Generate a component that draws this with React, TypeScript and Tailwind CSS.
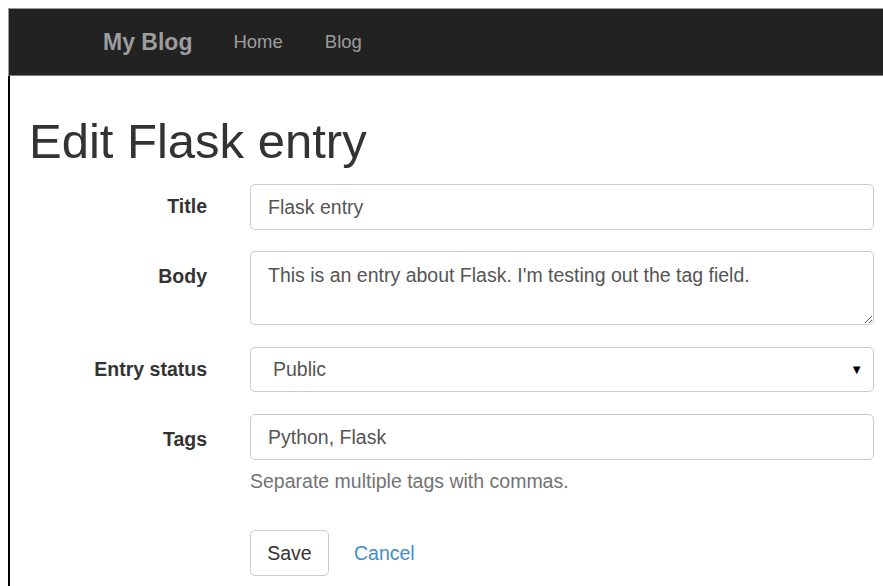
import React from "react";

const font = { fontFamily: '"Liberation Sans", Arial, sans-serif' };

const labelCls = "w-[197px] shrink-0 text-right font-bold text-[19.5px] text-[#333]";
const fieldCls =
  "rounded-[5px] border border-[#ccc] bg-white px-[17px] text-[19.5px] text-[#555] outline-none";

const EditEntry: React.FC = () => {
  return (
    <div className="h-[586px] w-full overflow-hidden bg-white pt-[8px] pl-[8px]" style={font}>
      <div className="flex h-full flex-col">
        {/* top navbar */}
        <nav className="flex h-[68px] shrink-0 items-center border-t border-l border-b border-t-[#9a9a9a] border-l-[#9a9a9a] border-b-[#7a7a7a] bg-[#222222] pl-[94px]">
          <span className="text-[23px] font-bold text-[#9d9d9d]">My Blog</span>
          <a className="ml-[41px] text-[18.5px] text-[#9d9d9d]">Home</a>
          <a className="ml-[42px] text-[18.5px] text-[#9d9d9d]">Blog</a>
        </nav>

        <main className="flex-1 border-l-2 border-black pr-[9px]">
          <h1 className="ml-[19px] mt-[36px] text-[49px] leading-[58px] text-[#333]">Edit Flask entry</h1>

          <form className="mt-[14px] flex flex-col">
            <div className="flex items-center">
              <label className={labelCls}>Title</label>
              <input className={`ml-[43px] h-[46px] flex-1 ${fieldCls}`} defaultValue="Flask entry" />
            </div>

            <div className="mt-[21px] flex items-start">
              <label className={`${labelCls} pt-[11px]`}>Body</label>
              <textarea
                className={`ml-[43px] h-[74px] flex-1 pt-[9px] ${fieldCls}`}
                defaultValue="This is an entry about Flask. I'm testing out the tag field."
              />
            </div>

            <div className="mt-[22px] flex items-center">
              <label className={labelCls}>Entry status</label>
              <div className="relative ml-[43px] flex-1">
                <select
                  className="h-[45px] w-full appearance-none rounded-[5px] border border-[#ccc] bg-white pl-[22px] text-[19.5px] text-[#555] outline-none"
                  defaultValue="public"
                >
                  <option value="public">Public</option>
                  <option value="draft">Draft</option>
                </select>
                <span className="pointer-events-none absolute right-[11px] top-[13px] text-[13px] text-black">▼</span>
              </div>
            </div>

            <div className="mt-[22px] flex items-start">
              <label className={`${labelCls} pt-[11px]`}>Tags</label>
              <div className="ml-[43px] flex flex-1 flex-col">
                <input className={`h-[46px] w-full ${fieldCls}`} defaultValue="Python, Flask" />
                <p className="mt-[7px] text-[19.5px] text-[#737373]">Separate multiple tags with commas.</p>
                <div className="mt-[34px] flex items-center">
                  <button
                    type="button"
                    className="h-[46px] w-[79px] rounded-[5px] border border-[#ccc] bg-white text-[19.5px] text-[#333]"
                  >
                    Save
                  </button>
                  <a className="ml-[25px] text-[19.5px] text-[#428bca]">Cancel</a>
                </div>
              </div>
            </div>
          </form>
        </main>
      </div>
    </div>
  );
};

export default EditEntry;
